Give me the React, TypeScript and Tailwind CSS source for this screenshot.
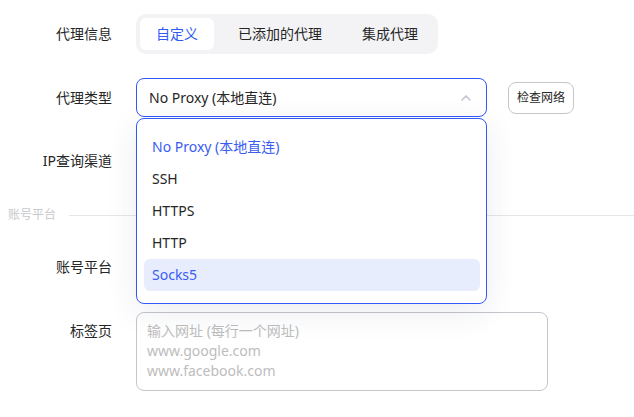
import { ChevronUp } from "lucide-react";

const font = { fontFamily: '"Noto Sans", "Noto Sans CJK SC", sans-serif' };

const options = ["No Proxy (本地直连)", "SSH", "HTTPS", "HTTP", "Socks5"];

function Label({ children, top }: { children: string; top?: boolean }) {
	return (
		<div
			className={`w-[112px] shrink-0 text-right text-sm text-[#262626] ${
				top ? "self-start pt-[9px] leading-5" : ""
			}`}
		>
			{children}
		</div>
	);
}

export default function App() {
	const selected = 0;
	const hovered = 4;

	return (
		<div className="min-h-[417px] w-[634px] bg-white pt-[14px]" style={font}>
			{/* 代理信息 */}
			<div className="flex h-10 items-center gap-6">
				<Label>代理信息</Label>
				<div className="flex h-10 items-center gap-2 rounded-[10px] bg-[#f3f3f5] p-1">
					<div className="flex h-8 items-center rounded-md bg-white px-4 text-sm text-[#2f5bf5]">
						自定义
					</div>
					<div className="flex h-8 items-center px-4 text-sm text-[#262626]">
						已添加的代理
					</div>
					<div className="flex h-8 items-center px-4 text-sm text-[#262626]">
						集成代理
					</div>
				</div>
			</div>

			{/* 代理类型 */}
			<div className="mt-6 flex h-[39px] items-center gap-6">
				<Label>代理类型</Label>
				<div className="relative w-[351px]">
					<div className="flex h-[39px] items-center justify-between rounded-lg border border-[#3358f6] px-3 text-sm text-[#262626]">
						<span>No Proxy (本地直连)</span>
						<ChevronUp className="h-4 w-4 text-[#c4c7cf]" strokeWidth={2.5} />
					</div>
					<div className="absolute left-0 top-full z-10 mt-px w-full rounded-lg border border-[#3358f6] bg-white py-3 pl-[7px] pr-[6px] shadow-[0_8px_32px_rgba(30,40,90,0.09)]">
						{options.map((o, i) => (
							<div
								key={o}
								className={`flex h-8 items-center rounded-md px-2 text-sm ${
									i === hovered ? "bg-[#e8edfd]" : ""
								} ${
									i === selected || i === hovered
										? "text-[#3a5cf3]"
										: "text-[#262626]"
								}`}
							>
								{o}
							</div>
						))}
					</div>
				</div>
				<button className="-ml-[3px] flex h-8 items-center rounded-lg border border-[#c4c6cc] px-2 text-xs text-[#262626]">
					检查网络
				</button>
			</div>

			{/* IP查询渠道 */}
			<div className="mt-6 flex h-10 items-center gap-6">
				<Label>IP查询渠道</Label>
				<div className="h-10 w-[351px]" />
			</div>

			{/* section divider */}
			<div className="mt-6 flex h-5 items-center">
				<span className="pl-2 text-xs text-[#c8c9cc]">账号平台</span>
				<div className="ml-[13px] h-px flex-1 bg-[#e6e6e8]" />
			</div>

			{/* 账号平台 */}
			<div className="mt-[22px] flex h-10 items-center gap-6">
				<Label>账号平台</Label>
				<div className="h-10 w-[351px]" />
			</div>

			{/* 标签页 */}
			<div className="mt-[25px] flex gap-6">
				<Label top>标签页</Label>
				<div className="h-[79px] w-[412px] rounded-lg border border-[#c4c6cc] px-2.5 py-2 text-sm leading-5 text-[#bdbdbd]">
					<div>输入网址 (每行一个网址)</div>
					<div>www.google.com</div>
					<div>www.facebook.com</div>
				</div>
			</div>
		</div>
	);
}
